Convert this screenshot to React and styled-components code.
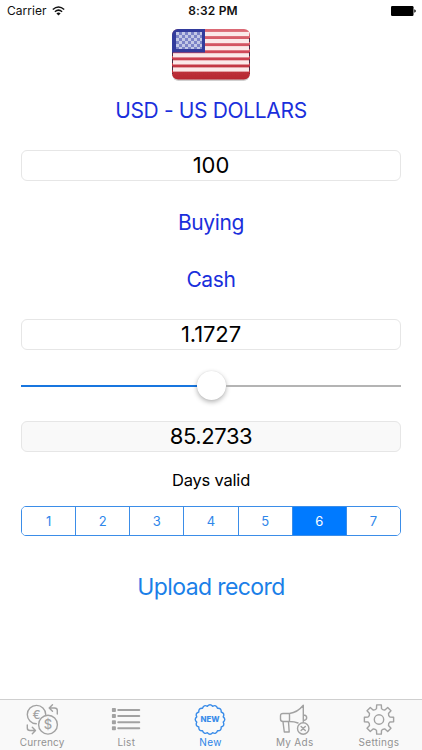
import { useState } from "react";
import styled, { createGlobalStyle } from "styled-components";

const GlobalStyle = createGlobalStyle`
    * {
        box-sizing: border-box;
    }

    body {
        margin: 0;
        background-color: #fff;
        font-family: Inter, "Liberation Sans", sans-serif;
    }

    button, input {
        font: inherit;
        padding: 0;
        margin: 0;
        background: none;
        border: none;
    }
`

const Screen = styled.div`
    width: 422px;
    height: 750px;
    display: flex;
    flex-direction: column;
    overflow: hidden;
    background-color: #fff;
`

const StatusBar = styled.header`
    height: 22px;
    flex: none;
    display: grid;
    grid-template-columns: 1fr auto 1fr;
    align-items: center;
    padding: 0 6px 1px 7px;
    font-size: 12px;
    color: #111;
`

const Carrier = styled.div`
    display: flex;
    align-items: center;
    gap: 5px;
    letter-spacing: 0.05px;
`

const Clock = styled.span`
    padding-left: 3px;
    font-weight: 600;
    letter-spacing: 0.15px;
`

const Battery = styled.svg`
    justify-self: end;
`

const Form = styled.main`
    flex: 1;
    display: flex;
    flex-direction: column;
    align-items: center;
    padding: 6px 21px 0;
`

const Picker = styled.button`
    height: 30px;
    line-height: 30px;
    margin-top: ${props => props.$top}px;
    font-size: ${props => props.$size || 21}px;
    letter-spacing: ${props => props.$spacing || -0.35}px;
    color: ${props => props.$color || "#1a2fdc"};
    white-space: nowrap;
`

const Field = styled.input`
    width: 100%;
    height: 31px;
    margin-top: ${props => props.$top}px;
    padding-bottom: 2px;
    border: 1px solid #e6e6e6;
    border-radius: 6px;
    background-color: ${props => props.readOnly ? "#f9f9f9" : "#fff"};
    text-align: center;
    font-size: 22px;
    letter-spacing: ${props => props.$spacing || 0}px;
    color: #000;
    outline: none;
`

const Slider = styled.div`
    width: 100%;
    height: 30px;
    margin-top: 21px;
    display: flex;
    align-items: center;
`

const Track = styled.div`
    flex: 1;
    height: 2px;
    background-color: ${props => props.$filled ? "#1876df" : "#b4b4b4"};
`

const Thumb = styled.div`
    width: 29px;
    height: 29px;
    margin-bottom: 2px;
    border-radius: 50%;
    background-color: #fff;
    box-shadow: 0 2px 5px rgba(0, 0, 0, 0.3), 0 0 1px rgba(0, 0, 0, 0.12);
`

const Caption = styled.p`
    margin: 17px 0 0;
    height: 22px;
    line-height: 22px;
    font-size: 16.5px;
    letter-spacing: -0.2px;
    color: #000;
`

const Segments = styled.div`
    width: 100%;
    height: 30px;
    margin-top: 15px;
    display: flex;
    border: 1px solid #3b8de8;
    border-radius: 5px;
    overflow: hidden;
`

const Segment = styled.button`
    flex: 1;
    padding-bottom: 1px;
    font-size: 13px;
    color: ${props => props.$active ? "#fff" : "#2f86ea"};
    background-color: ${props => props.$active ? "#007aff" : "#fff"};

    & + & {
        border-left: 1px solid #3b8de8;
    }
`

const TabBar = styled.nav`
    height: 51px;
    flex: none;
    display: grid;
    grid-template-columns: repeat(5, 1fr);
    padding-right: 1px;
    border-top: 1px solid #cfcfcf;
    background-color: #f9f9f9;
`

const Tab = styled.button`
    display: flex;
    flex-direction: column;
    align-items: center;
    padding-top: 3px;
    font-size: 10px;
    line-height: 14px;
    letter-spacing: ${props => props.$spacing || 0}px;
    color: ${props => props.$active ? "#2b84e8" : "#929292"};
`

const TabIcon = styled.svg`
    width: 34px;
    height: 33px;
    margin-bottom: -1px;
    fill: none;
    stroke: ${props => props.$active ? "#398ce9" : "#a2a2a2"};
    stroke-width: 1.4;
    stroke-linecap: round;
    stroke-linejoin: round;
    font-family: Inter, "Liberation Sans", sans-serif;
    letter-spacing: 0;

    text {
        fill: ${props => props.$active ? "#398ce9" : "#a2a2a2"};
        stroke: none;
        text-anchor: middle;
    }
`

const polar = (radius, degrees) => {
    const angle = degrees * Math.PI / 180
    return `${(17 + radius * Math.cos(angle)).toFixed(2)} ${(16.5 + radius * Math.sin(angle)).toFixed(2)}`
}

const gearPath = Array.from({ length: 8 }, (_, i) => {
    const a = i * 45
    return `${i ? "L" : "M"}${polar(11.2, a - 13)}L${polar(14.8, a - 9)}L${polar(14.8, a + 9)}L${polar(11.2, a + 13)}Q${polar(10, a + 22.5)} ${polar(11.2, a + 32)}`
}).join("") + "Z"

const badgePath = Array.from({ length: 16 }, (_, i) => {
    const a = i * 22.5 - 90
    return `${i ? "" : "M" + polar(13.5, a - 11.25)}Q${polar(16.3, a)} ${polar(13.5, a + 11.25)}`
}).join("") + "Z"

function Flag() {
  return (
    <svg width="82" height="56" viewBox="0 0 82 56">
        <defs>
            <clipPath id="flag-shape">
                <rect x="2" y="1" width="78" height="50.5" rx="6" />
            </clipPath>
            <linearGradient id="flag-red" x1="0" y1="0" x2="0" y2="1">
                <stop offset="0" stopColor="#db6a75" />
                <stop offset="0.5" stopColor="#cf4656" />
                <stop offset="1" stopColor="#b5262e" />
            </linearGradient>
            <pattern id="flag-stars" x="6" y="4" width="6" height="6" patternUnits="userSpaceOnUse">
                <rect width="6" height="6" fill="#7c84c7" />
                <rect width="3" height="3" fill="#c3c8e6" />
                <rect x="3" y="3" width="3" height="3" fill="#c3c8e6" />
            </pattern>
            <filter id="flag-soft">
                <feGaussianBlur stdDeviation="0.6" />
            </filter>
        </defs>
        <rect x="2.5" y="3" width="77" height="50" rx="6" fill="#777" opacity="0.35" filter="url(#flag-soft)" />
        <g filter="url(#flag-soft)">
            <g clipPath="url(#flag-shape)">
                <rect x="2" y="1" width="78" height="51" fill="url(#flag-red)" />
                {[0, 1, 2, 3, 4, 5].map(i => (
                    <rect key={i} x="3" y={3.9 + i * 7.1} width="76" height="4.2" fill="#fbe9e9" />
                ))}
                <path d="M2.5 24V46M79.5 10V46" stroke="#482a43" strokeWidth="1" strokeDasharray="4 3.1" />
                <rect x="2" y="1" width="33" height="23.5" fill="#303a9c" />
                <rect x="6" y="4" width="26" height="17" fill="url(#flag-stars)" />
            </g>
        </g>
    </svg>
  );
}

const tabs = [
    {
        label: "Currency",
        spacing: 0.12,
        icon: (
            <>
                <path d="M11.3 20.8A9.2 9.2 0 1 1 20.7 11.4" />
                <circle cx="23" cy="21.7" r="9.4" />
                <text x="11.5" y="15.6" fontSize="12" fontWeight="500">€</text>
                <text x="23" y="26.2" fontSize="13" fontWeight="500">$</text>
                <path d="M32.3 11V7.5Q32.3 5 29.5 5H24.5M27.5 1.7L24.2 5L27.5 8.3M2.3 22V25Q2.3 27.5 5 27.5H10M7.3 24.3L10.5 27.5L7.3 30.8" />
            </>
        ),
    },
    {
        label: "List",
        spacing: 0.3,
        icon: (
            <>
                {[7, 13, 19.2, 25.2].map(y => (
                    <g key={y}>
                        <rect x="3.7" y={y - 1.2} width="2.4" height="2.4" strokeWidth="1.6" fill="#a2a2a2" />
                        <path d={`M9.2 ${y}H30.3`} strokeWidth="1.9" />
                    </g>
                ))}
            </>
        ),
    },
    {
        label: "New",
        spacing: 0.3,
        icon: (
            <>
                <path d={badgePath} />
                <text x="17" y="19.4" fontSize="8" fontWeight="800" textLength="19" lengthAdjust="spacingAndGlyphs">NEW</text>
            </>
        ),
    },
    {
        label: "My Ads",
        spacing: 0.3,
        icon: (
            <>
                <path d="M11.5 10.5H5Q2.5 10.5 2.5 13V16Q2.5 18.5 5 18.5H11.5ZM11.5 10.5Q19.5 9.5 25.3 2.3V18.5M11.5 18.5Q16.5 18.5 20 20M5 18.8L6.3 29H11.2L10.5 18.8M25.5 12Q28.7 12.2 28.7 14.8Q28.7 17.2 25.5 17.5" />
                <circle cx="25.2" cy="25.5" r="5.7" />
                <path d="M23.1 23.4L27.3 27.6M27.3 23.4L23.1 27.6" />
            </>
        ),
    },
    {
        label: "Settings",
        spacing: 0.3,
        icon: (
            <>
                <path d={gearPath} />
                <circle cx="17" cy="16.5" r="4.7" />
            </>
        ),
    },
]

function App() {
  const [days, setDays] = useState(6)
  const [tab, setTab] = useState("New")

  return (
    <Screen>
        <GlobalStyle />
        <StatusBar>
            <Carrier>
                Carrier
                <svg width="13" height="10" viewBox="0 0 13 10" fill="none" stroke="#111" strokeWidth="1.5">
                    <path d="M0.8 3.5Q6.5 -1.4 12.2 3.5M2.9 5.7Q6.5 2.6 10.1 5.7" />
                    <path d="M6.5 9.6L4.4 7.4Q6.5 5.8 8.6 7.4Z" fill="#111" stroke="none" />
                </svg>
            </Carrier>
            <Clock>8:32 PM</Clock>
            <Battery width="25" height="10" viewBox="0 0 25 10">
                <rect width="22.5" height="10" rx="1.2" />
                <path d="M23.3 3.3Q24.8 4 24.8 5T23.3 6.7Z" />
            </Battery>
        </StatusBar>

        <Form>
            <Flag />
            <Picker $top={12}>USD - US DOLLARS</Picker>
            <Field $top={24} defaultValue="100" />
            <Picker $top={27}>Buying</Picker>
            <Picker $top={27}>Cash</Picker>
            <Field $top={24} $spacing={-0.1} defaultValue="1.1727" />
            <Slider>
                <Track $filled />
                <Thumb />
                <Track />
            </Slider>
            <Field $top={20} $spacing={-0.4} value="85.2733" readOnly />
            <Caption>Days valid</Caption>
            <Segments>
                {[1, 2, 3, 4, 5, 6, 7].map(day => (
                    <Segment key={day} $active={day === days} onClick={() => setDays(day)}>{day}</Segment>
                ))}
            </Segments>
            <Picker $top={36} $size={23} $spacing={-0.6} $color="#1b7fe8">Upload record</Picker>
        </Form>

        <TabBar>
            {tabs.map(({ label, spacing, icon }) => (
                <Tab key={label} $active={label === tab} $spacing={spacing} onClick={() => setTab(label)}>
                    <TabIcon viewBox="0 0 34 33" $active={label === tab}>{icon}</TabIcon>
                    {label}
                </Tab>
            ))}
        </TabBar>
    </Screen>
  );
}

export default App;
